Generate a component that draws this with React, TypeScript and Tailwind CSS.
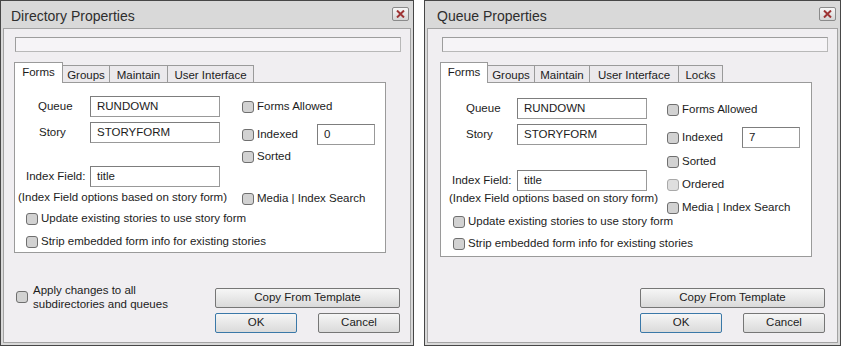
import type { ReactNode } from 'react'

const FONT = "font-['Liberation_Sans',Arial,sans-serif]"

const Check = ({ disabled }: { disabled?: boolean }) => (
  <span
    className={
      disabled
        ? 'inline-block w-[12px] h-[12px] shrink-0 rounded-[3px] border border-[#a9a9a9] bg-[#dedede]'
        : 'inline-block w-[12px] h-[12px] shrink-0 rounded-[3px] border border-[#6f6f6f] bg-[#d2d2d2]'
    }
  />
)

const CheckRow = ({ label, className = '', disabled }: { label: string; className?: string; disabled?: boolean }) => (
  <div className={`flex items-center gap-[3px] h-[14px] ${className}`}>
    <Check disabled={disabled} />
    <span className="whitespace-nowrap">{label}</span>
  </div>
)

const TextBox = ({ value, className = '' }: { value: string; className?: string }) => (
  <div
    className={`h-[21px] flex items-center pl-[6px] bg-white border border-[#999] border-t-[#7d7d7d] border-l-[#7d7d7d] ${className}`}
  >
    {value}
  </div>
)

const Button = ({ children, primary, className = '' }: { children: ReactNode; primary?: boolean; className?: string }) => (
  <div
    className={`h-[20px] flex items-center justify-center rounded-[2px] border bg-gradient-to-b from-[#f6f6f6] to-[#dadada] ${
      primary ? 'border-[#3a78a8]' : 'border-[#767676]'
    } ${className}`}
  >
    {children}
  </div>
)

const CloseButton = () => (
  <div className="mt-[6px] w-[17px] h-[14px] rounded-[2px] border border-[#8a8a8a] bg-gradient-to-b from-[#f7f7f7] to-[#d4d4d4] flex items-center justify-center">
    <svg width="9" height="8" viewBox="0 0 9 8">
      <path d="M1 0.5 L8 7.5 M8 0.5 L1 7.5" stroke="#9e3434" strokeWidth="2" />
    </svg>
  </div>
)

interface Tab {
  name: string
  w: string
}

const Tabs = ({ tabs, className }: { tabs: Tab[]; className: string }) => (
  <div className={`relative z-10 flex items-end h-[21px] ${className}`}>
    {tabs.map((t, i) =>
      i === 0 ? (
        <div
          key={t.name}
          className={`h-[21px] ${t.w} bg-white border border-b-0 border-[#9a9a9a] flex items-start justify-center pt-[1px]`}
        >
          {t.name}
        </div>
      ) : (
        <div
          key={t.name}
          className={`h-[17px] mb-[1px] ${t.w} bg-[#ebe9ec] border border-l-0 border-b-0 border-[#9a9a9a] flex items-start justify-center pt-[1px]`}
        >
          {t.name}
        </div>
      )
    )}
  </div>
)

const Dialog = ({ right }: { right?: boolean }) => {
  const tabs: Tab[] = right
    ? [
        { name: 'Forms', w: 'w-[48px]' },
        { name: 'Groups', w: 'w-[47px]' },
        { name: 'Maintain', w: 'w-[55px]' },
        { name: 'User Interface', w: 'w-[89px]' },
        { name: 'Locks', w: 'w-[44px]' }
      ]
    : [
        { name: 'Forms', w: 'w-[49px]' },
        { name: 'Groups', w: 'w-[47px]' },
        { name: 'Maintain', w: 'w-[58px]' },
        { name: 'User Interface', w: 'w-[86px]' }
      ]

  return (
    <div
      className={`h-[346px] flex flex-col border border-[#474747] bg-[#d9d9d9] ${right ? 'w-[417px] ml-[10px]' : 'w-[414px]'}`}
    >
      {/* title bar */}
      <div className="h-[27px] flex items-start justify-between pr-[4px]">
        <span className={`text-[14px] text-[#2e2e2e] pt-[5px] ${right ? 'pl-[12px]' : 'pl-[10px]'}`}>
          {right ? 'Queue Properties' : 'Directory Properties'}
        </span>
        <CloseButton />
      </div>

      {/* body */}
      <div className="flex-1 mx-[2px] mb-[2px] border border-[#a3a3a3] bg-[#f0eef1] flex flex-col">
        <div
          className={`mt-[8px] w-[386px] h-[15px] bg-[#f6f4f7] border border-[#b8b8b8] border-t-[#9d9d9d] border-l-[#9d9d9d] ${
            right ? 'ml-[14px]' : 'ml-[11px]'
          }`}
        />

        <Tabs tabs={tabs} className={right ? 'mt-[10px] ml-[12px]' : 'mt-[10px] ml-[10px]'} />

        {/* panel */}
        <div
          className={`-mt-[1px] w-[372px] bg-white border border-[#9a9a9a] ${
            right ? 'ml-[12px] h-[175px] pt-[15px]' : 'ml-[10px] h-[171px] pt-[13px]'
          }`}
        >
          <div className="flex">
            {/* left column */}
            <div className={right ? 'w-[226px]' : 'w-[227px]'}>
              <div className="flex items-center">
                <span className={right ? 'w-[76px] pl-[25px]' : 'w-[75px] pl-[23px]'}>Queue</span>
                <TextBox value="RUNDOWN" className="w-[130px]" />
              </div>
              <div className="flex items-center mt-[5px]">
                <span className={right ? 'w-[76px] pl-[25px]' : 'w-[75px] pl-[24px]'}>Story</span>
                <TextBox value="STORYFORM" className="w-[130px]" />
              </div>
              <div className={`flex items-center ${right ? 'mt-[25px]' : 'mt-[23px]'}`}>
                <span className={right ? 'w-[76px] pl-[11px]' : 'w-[75px] pl-[11px]'}>Index Field:</span>
                <TextBox value="title" className="w-[130px]" />
              </div>
              <div
                className={`leading-[14px] whitespace-nowrap ${right ? 'pl-[8px] mt-0' : 'pl-[3px] mt-[3px]'}`}
              >
                (Index Field options based on story form)
              </div>
            </div>

            {/* right column */}
            <div className={right ? 'pt-[5px]' : 'pt-[4px]'}>
              <CheckRow label="Forms Allowed" />
              <div className="flex items-center mt-[10px] h-[21px]">
                <div className="w-[75px] flex items-center gap-[3px]">
                  <Check />
                  <span>Indexed</span>
                </div>
                <TextBox value={right ? '7' : '0'} className="w-[58px]" />
              </div>
              <CheckRow label="Sorted" className={right ? 'mt-[7px]' : 'mt-[5px]'} />
              {right && <CheckRow label="Ordered" className="mt-[9px]" disabled />}
              <CheckRow label="Media | Index Search" className={right ? 'mt-[9px]' : 'mt-[28px]'} />
            </div>
          </div>

          <CheckRow
            label="Update existing stories to use story form"
            className={right ? 'mt-0 pl-[12px]' : 'mt-[6px] pl-[11px]'}
          />
          <CheckRow
            label="Strip embedded form info for existing stories"
            className={right ? 'mt-[8px] pl-[12px]' : 'mt-[9px] pl-[11px]'}
          />
        </div>

        {/* bottom */}
        <div className={`flex items-start justify-between ${right ? 'mt-[26px] mr-[12px]' : 'mt-[30px] mr-[10px]'}`}>
          {right ? (
            <div />
          ) : (
            <div className="ml-[12px] flex items-center gap-[5px] leading-[14px]">
              <Check />
              <div>
                <div>Apply changes to all</div>
                <div>subdirectories and queues</div>
              </div>
            </div>
          )}
          <div className="mt-[5px] w-[185px] flex flex-col gap-[5px]">
            <Button>Copy From Template</Button>
            <div className="flex justify-between">
              <Button primary className="w-[82px]">
                OK
              </Button>
              <Button className="w-[82px]">Cancel</Button>
            </div>
          </div>
        </div>
      </div>
    </div>
  )
}

export default function App() {
  return (
    <div className={`w-[842px] h-[346px] bg-white flex text-[11.5px] text-[#1c1c1c] ${FONT}`}>
      <Dialog />
      <Dialog right />
    </div>
  )
}
